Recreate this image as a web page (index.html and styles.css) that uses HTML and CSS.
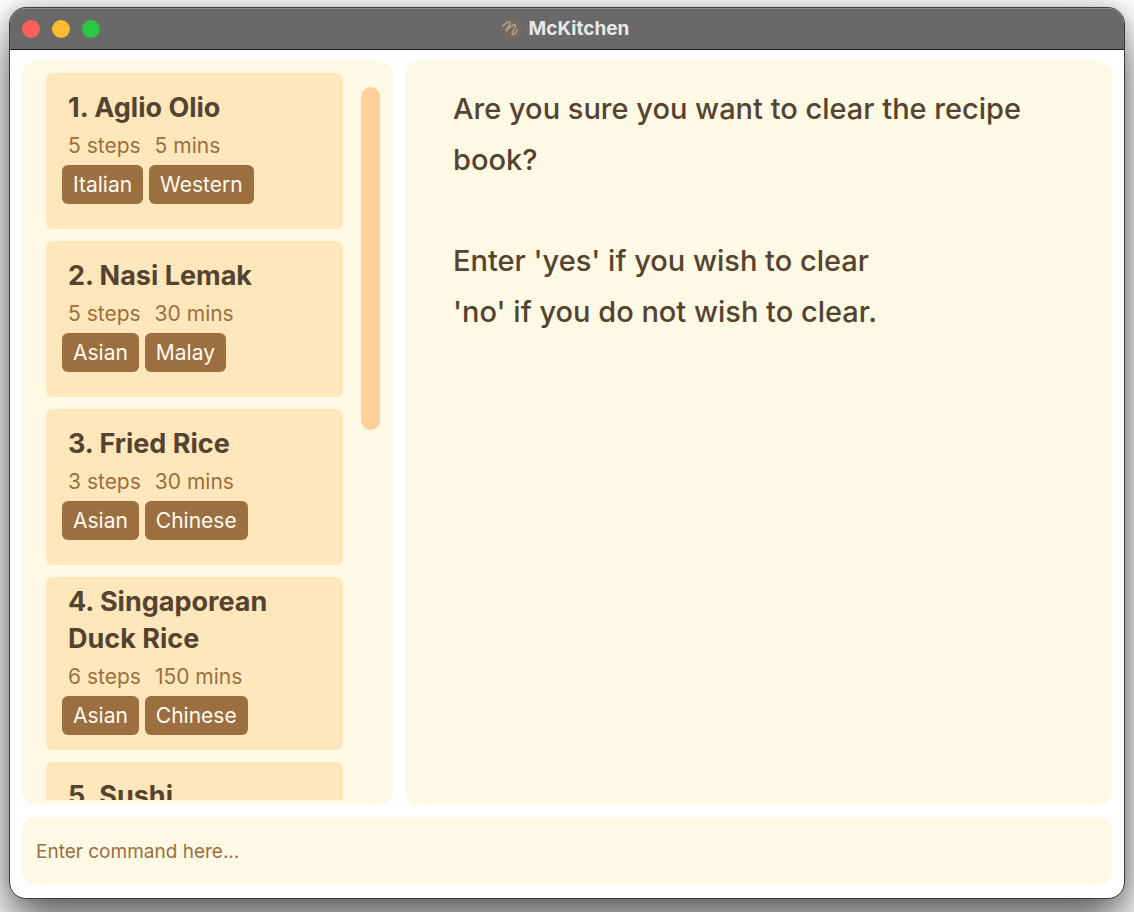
FILE: index.html
```html
<!DOCTYPE html>
<html lang="en">
<head>
<meta charset="utf-8">
<meta name="viewport" content="width=device-width, initial-scale=1">
<title>McKitchen</title>
<link rel="stylesheet" href="styles.css">
</head>
<body>
<div class="window">
  <header class="titlebar">
    <div class="controls">
      <button class="control close" type="button" aria-label="Close"></button>
      <button class="control minimize" type="button" aria-label="Minimize"></button>
      <button class="control maximize" type="button" aria-label="Maximize"></button>
    </div>
    <h1 class="app-title">
      <svg class="app-icon" viewBox="0 0 24 24" aria-hidden="true">
        <circle cx="12" cy="12" r="11" fill="#786a5a"/>
        <path d="M4 9C6 7 9 4 11 5C12 7 8 11 7 14C10 11 13 7 16 8C18 9 13 14 13 17C14 19 17 16 18 13" fill="none" stroke="#aba093" stroke-width="1.6" stroke-linecap="round" stroke-linejoin="round"/>
      </svg>
      McKitchen
    </h1>
  </header>
  <main class="content">
    <section class="panel recipes" aria-label="Recipes">
      <ol class="recipe-list">
        <li class="card">
          <h2 class="name">1. Aglio Olio</h2>
          <p class="meta"><span>5 steps</span><span>5 mins</span></p>
          <div class="tags"><span class="tag">Italian</span><span class="tag">Western</span></div>
        </li>
        <li class="card">
          <h2 class="name">2. Nasi Lemak</h2>
          <p class="meta"><span>5 steps</span><span>30 mins</span></p>
          <div class="tags"><span class="tag">Asian</span><span class="tag">Malay</span></div>
        </li>
        <li class="card">
          <h2 class="name">3. Fried Rice</h2>
          <p class="meta"><span>3 steps</span><span>30 mins</span></p>
          <div class="tags"><span class="tag">Asian</span><span class="tag">Chinese</span></div>
        </li>
        <li class="card">
          <h2 class="name">4. Singaporean Duck Rice</h2>
          <p class="meta"><span>6 steps</span><span>150 mins</span></p>
          <div class="tags"><span class="tag">Asian</span><span class="tag">Chinese</span></div>
        </li>
        <li class="card">
          <h2 class="name">5. Sushi</h2>
        </li>
      </ol>
      <div class="scrollbar"><div class="thumb"></div></div>
    </section>
    <section class="panel message" aria-label="Message">
      <p class="message-text">Are you sure you want to clear the recipe book?</p>
      <p class="message-text">Enter 'yes' if you wish to clear<br>'no' if you do not wish to clear.</p>
    </section>
    <form class="panel command">
      <input class="command-input" type="text" aria-label="Command" placeholder="Enter command here...">
    </form>
  </main>
</div>
</body>
</html>
```
FILE: styles.css
```css
* {
  box-sizing: border-box;
}

body {
  margin: 0;
  height: 100vh;
  padding: 7px 9px 13px;
  overflow: hidden;
  background: #fff;
  font-family: Inter, "Liberation Sans", sans-serif;
  color: #544330;
}

h1, h2, p, ol {
  margin: 0;
  padding: 0;
}

.window {
  height: 100%;
  display: flex;
  flex-direction: column;
  background: #fff;
  border: 1px solid #3c3c3c;
  border-radius: 17px;
  overflow: hidden;
  box-shadow: 0 26px 48px rgba(0, 0, 0, 0.6), 0 0 20px rgba(0, 0, 0, 0.2);
}

.titlebar {
  flex: none;
  height: 42px;
  display: grid;
  grid-template-columns: 1fr auto 1fr;
  align-items: center;
  padding: 0 12px;
  background: #696969;
  border-bottom: 1px solid #1e1e1e;
  box-shadow: inset 0 1px #8c8c8c;
}

.controls {
  display: flex;
  gap: 12px;
}

.control {
  width: 18px;
  height: 18px;
  padding: 0;
  border: 0;
  border-radius: 50%;
}

.close { background: #ff5f57; }
.minimize { background: #febc2e; }
.maximize { background: #28c840; }

.app-title {
  display: flex;
  align-items: center;
  gap: 6px;
  padding-right: 6px;
  font-size: 19px;
  line-height: 24px;
  font-weight: 700;
  color: #e8e8e8;
}

.app-icon {
  width: 24px;
  height: 24px;
}

.content {
  flex: 1;
  min-height: 0;
  display: grid;
  grid-template-columns: 371fr 707fr;
  grid-template-rows: minmax(0, 1fr) auto;
  gap: 12px;
  padding: 11px 12px 13px;
}

.panel {
  background: #fef9e4;
  border-radius: 14px;
}

.recipes {
  display: flex;
  gap: 18px;
  padding: 12px 13px 5px 24px;
}

.recipe-list {
  flex: 1;
  min-width: 0;
  display: flex;
  flex-direction: column;
  gap: 12px;
  overflow: hidden;
  list-style: none;
}

.card {
  flex: none;
  min-height: 156px;
  display: flex;
  flex-direction: column;
  justify-content: center;
  padding: 6px 16px 15px;
  background: #ffe7bb;
  border-radius: 6px;
}

.card:last-child {
  justify-content: flex-start;
  padding-top: 15px;
}

.name {
  padding: 0 6px;
  font-size: 27px;
  line-height: 37px;
  font-weight: 700;
}

.meta {
  display: flex;
  gap: 14px;
  padding: 0 6px;
  font-size: 21px;
  line-height: 39px;
  color: #9b6f40;
}

.tags {
  display: flex;
  gap: 6px;
}

.tag {
  padding: 0 11px;
  background: #9b6f40;
  border-radius: 6px;
  font-size: 21px;
  line-height: 39px;
  color: #fffaf0;
}

.scrollbar {
  flex: none;
  width: 19px;
  padding: 14px 0;
}

.thumb {
  height: 49%;
  background: #ffd199;
  border-radius: 10px;
}

.message {
  display: flex;
  flex-direction: column;
  gap: 50px;
  padding: 22px 48px;
}

.message-text {
  font-size: 29px;
  line-height: 51px;
  font-weight: 500;
}

.command {
  grid-column: 1 / -1;
  display: flex;
}

.command-input {
  flex: 1;
  height: 68px;
  padding: 0 14px;
  border: 0;
  outline: 0;
  background: transparent;
  font: inherit;
  font-size: 19px;
  color: #544330;
}

.command-input::placeholder {
  color: #9b6f40;
  opacity: 1;
}
```
